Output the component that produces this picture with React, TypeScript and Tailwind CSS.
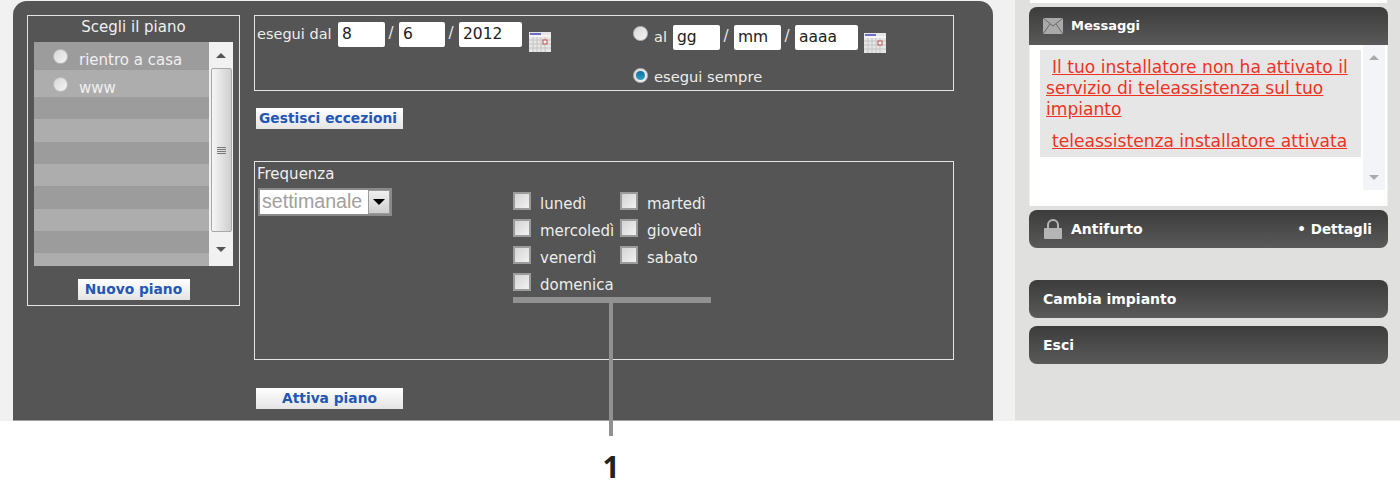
const font = "font-['DejaVu_Sans',sans-serif]";

function Radio({ on }: { on?: boolean }) {
  return (
    <span className="w-[15px] h-[15px] shrink-0 rounded-full border border-[#bdbdbd] bg-gradient-to-br from-[#d8d8d8] to-[#f4f4f4] flex items-center justify-center">
      {on && <span className="w-[9px] h-[9px] rounded-full bg-gradient-to-b from-[#0b6f9f] to-[#2f9fc4]"></span>}
    </span>
  );
}

function Field({ value, w, after }: { value: string; w: string; after?: boolean }) {
  return (
    <>
      <span className={`${w} h-[25px] bg-white rounded-[2px] pl-[4px] text-[15.5px] leading-[24px] text-[#222] shrink-0`}>{value}</span>
      {after && <span className="w-[14px] pr-[2px] text-center text-[15px] text-[#e8e8e8]">/</span>}
    </>
  );
}

function CalendarIcon() {
  return (
    <svg width="22" height="20" viewBox="0 0 22 20" className="block shrink-0">
      <rect x="0" y="0" width="22" height="20" fill="#e6e6e6" />
      <rect x="1" y="1" width="11" height="2" fill="#6f6fbf" />
      <rect x="0" y="3" width="22" height="2" fill="#f4f4f4" />
      <path d="M0 8h22M0 12h22M0 16h22M4 5v15M8 5v15M12 5v15M16 5v15" stroke="#c4c4c4" strokeWidth="1" />
      <rect x="14" y="8" width="4" height="4" fill="#f4f4f4" stroke="#c0504d" strokeWidth="1" />
    </svg>
  );
}

function Day({ label }: { label: string }) {
  return (
    <div className="flex items-start gap-[9px] h-[27px] whitespace-nowrap">
      <span className="w-[18px] h-[18px] shrink-0 border-2 border-[#9b9b9b] bg-gradient-to-br from-[#d4d4d4] to-[#f2f2f2]"></span>
      <span className="text-[15px] leading-[22px] mt-[1px] text-[#ededed]">{label}</span>
    </div>
  );
}

function FlatButton({ children, w, center }: { children: string; w: string; center?: boolean }) {
  return (
    <div className={`${w} h-[21px] bg-gradient-to-b from-[#ffffff] to-[#e4e4e4] text-[#2457b5] font-bold text-[13.8px] leading-[21px] whitespace-nowrap ${center ? "text-center" : "pl-[3px]"}`}>
      {children}
    </div>
  );
}

function DarkBar({ children, rounded = "rounded-[8px]" }: { children: React.ReactNode; rounded?: string }) {
  return (
    <div className={`h-[38px] ${rounded} bg-gradient-to-b from-[#3c3c3c] to-[#5a5a5a] flex items-center px-[14px] text-white font-bold text-[14px]`}>
      {children}
    </div>
  );
}

const rows = [
  ["h-[28px]", "bg-[#9c9c9c]"],
  ["h-[27px]", "bg-[#adadad]"],
  ["h-[22px]", "bg-[#9c9c9c]"],
  ["h-[23px]", "bg-[#adadad]"],
  ["h-[22px]", "bg-[#9c9c9c]"],
  ["h-[22px]", "bg-[#adadad]"],
  ["h-[23px]", "bg-[#9c9c9c]"],
  ["h-[22px]", "bg-[#adadad]"],
  ["h-[22px]", "bg-[#9c9c9c]"],
  ["h-[13px]", "bg-[#adadad]"],
];

export default function App() {
  return (
    <div className={`relative w-[1400px] h-[493px] bg-white overflow-hidden ${font}`}>
      <div className="flex h-[421px] bg-[#f1f1f1] pl-[13px]">
        {/* main panel */}
        <div className="w-[980px] h-[420px] mt-[1px] bg-[#545554] rounded-t-[14px] border-b border-b-[#a0a0a0] flex items-start pl-[14px] pt-[14px] text-[#ededed]">
          <div className="w-[213px] h-[291px] border border-[#e4e4e4] flex flex-col items-center">
            <div className="h-[26px] text-[15px] leading-[22px] text-[#f0f0f0]">Scegli il piano</div>
            <div className="w-[199px] h-[224px] flex">
              <div className="w-[175px] flex flex-col relative">
                {rows.map(([h, bg], i) => (
                  <div key={i} className={`${h} ${bg} flex items-center gap-[11px] pl-[19px] text-[15px] text-[#f0f0f0]`}>
                    {i === 0 && <><Radio /><span className="mt-[8px]">rientro a casa</span></>}
                    {i === 1 && <><span className="mt-[1px]"><Radio /></span><span className="mt-[9px]">www</span></>}
                  </div>
                ))}
              </div>
              <div className="w-[24px] bg-[#f1f1f1] flex flex-col items-center">
                <div className="h-[26px] flex items-center justify-center">
                  <span className="border-x-[5px] border-x-transparent border-b-[5px] border-b-[#555]"></span>
                </div>
                <div className="w-[21px] h-[164px] rounded-[2px] border border-[#a8a8a8] bg-gradient-to-r from-[#f6f6f6] to-[#cfcfcf] flex flex-col items-center justify-center gap-[1px]">
                  <span className="w-[9px] h-[1px] bg-[#777]"></span>
                  <span className="w-[9px] h-[1px] bg-[#777]"></span>
                  <span className="w-[9px] h-[1px] bg-[#777]"></span>
                  <span className="w-[9px] h-[1px] bg-[#777]"></span>
                </div>
                <div className="flex-1 flex items-center justify-center">
                  <span className="border-x-[5px] border-x-transparent border-t-[5px] border-t-[#555]"></span>
                </div>
              </div>
            </div>
            <div className="mt-[13px]">
              <FlatButton w="w-[112px]" center>Nuovo piano</FlatButton>
            </div>
          </div>

          <div className="ml-[14px] w-[700px] flex flex-col">
            {/* date range */}
            <div className="h-[76px] border border-[#e4e4e4] flex pl-[2px] pt-[6px]">
              <div className="w-[376px] flex items-start">
                <span className="w-[81px] text-[14.5px] leading-[24px] whitespace-nowrap">esegui dal</span>
                <Field value="8" w="w-[47px]" after />
                <Field value="6" w="w-[46px]" after />
                <Field value="2012" w="w-[63px]" />
                <span className="ml-[7px] mt-[10px]"><CalendarIcon /></span>
              </div>
              <div className="flex flex-col gap-[9px]">
                <div className="flex items-start mt-[3px]">
                  <span className="mt-[1px]"><Radio /></span>
                  <span className="w-[25px] pl-[6px] text-[14.5px] leading-[24px]">al</span>
                  <Field value="gg" w="w-[47px]" after />
                  <Field value="mm" w="w-[47px]" after />
                  <Field value="aaaa" w="w-[63px]" />
                  <span className="ml-[6px] mt-[8px]"><CalendarIcon /></span>
                </div>
                <div className="flex items-center gap-[6px] text-[14.7px]">
                  <Radio on />
                  <span className="mt-[4px]">esegui sempre</span>
                </div>
              </div>
            </div>

            <div className="mt-[17px] ml-[2px]">
              <FlatButton w="w-[147px]">Gestisci eccezioni</FlatButton>
            </div>

            {/* frequency */}
            <div className="mt-[32px] h-[199px] border border-[#e4e4e4] flex items-start pl-[3px] pt-[2px]">
              <div className="w-[255px]">
                <div className="-ml-[1px] text-[15px] leading-[20px] text-[#f0f0f0]">Frequenza</div>
                <div className="mt-[4px] w-[134px] h-[28px] border-2 border-[#8a8a8a] bg-white flex items-center pl-[2px] font-['Liberation_Sans',sans-serif] text-[19.6px] text-[#a0a0a0]">
                  <span className="flex-1">settimanale</span>
                  <span className="w-[22px] h-[24px] border border-[#9a9a9a] bg-gradient-to-b from-[#f0f0f0] to-[#cfcfcf] flex items-center justify-center">
                    <span className="border-x-[6px] border-x-transparent border-t-[6px] border-t-black"></span>
                  </span>
                </div>
              </div>
              <div className="mt-[28px] grid grid-cols-[107px_100px] auto-rows-[27px]">
                <Day label="lunedì" />
                <Day label="martedì" />
                <Day label="mercoledì" />
                <Day label="giovedì" />
                <Day label="venerdì" />
                <Day label="sabato" />
                <Day label="domenica" />
              </div>
            </div>

            <div className="mt-[28px] ml-[2px]">
              <FlatButton w="w-[147px]" center>Attiva piano</FlatButton>
            </div>
          </div>
        </div>

        {/* sidebar */}
        <div className="ml-[22px] w-[385px] h-[421px] bg-[#e0e0de] border-b border-b-[#eeeeee] pl-[14px] pr-[12px]">
          <div className="h-[3px] mx-[1px] bg-white"></div>
          <div className="mt-[4px]">
            <DarkBar rounded="rounded-t-[8px]">
              <svg width="20" height="16" viewBox="0 0 20 16" className="mr-[8px]">
                <rect width="20" height="16" fill="#a9a9a9" />
                <path d="M0 0l10 8 10-8M0 16l7-10M20 16l-7-10" fill="none" stroke="#6a6a6a" strokeWidth="1" />
              </svg>
              <span className="text-[13px]">Messaggi</span>
            </DarkBar>
            <div className="h-[161px] bg-white flex pl-[10px] pr-[2px] border-x border-x-[#eeeeee]">
              <div className="w-[322px] h-[107px] mt-[5px] bg-[#e6e6e6] pl-[6px] text-[17.1px] leading-[21px] text-[#f0321e] underline">
                <p className="pt-[7px] whitespace-nowrap"><span className="pl-[6px]">Il tuo installatore non ha attivato il</span><br />servizio di teleassistenza sul tuo<br />impianto</p>
                <p className="mt-[11px] pl-[6px] whitespace-nowrap">teleassistenza installatore attivata</p>
              </div>
              <div className="ml-[2px] w-[22px] h-[145px] bg-[#f3f4f7] flex flex-col items-center justify-between py-[10px]">
                <span className="border-x-[5px] border-x-transparent border-b-[5px] border-b-[#aaa]"></span>
                <span className="border-x-[5px] border-x-transparent border-t-[5px] border-t-[#aaa]"></span>
              </div>
            </div>
          </div>
          <div className="mt-[4px]">
            <DarkBar>
              <svg width="18" height="20" viewBox="0 0 18 20" className="ml-[1px] mr-[9px]">
                <path d="M4 9V6a5 5 0 0 1 10 0v3" fill="none" stroke="#b5b5b5" strokeWidth="2" />
                <rect x="0" y="9" width="18" height="11" rx="1" fill="#b5b5b5" />
              </svg>
              <span>Antifurto</span>
              <span className="ml-auto text-[13.5px] mr-[2px]">• Dettagli</span>
            </DarkBar>
          </div>
          <div className="mt-[32px]"><DarkBar>Cambia impianto</DarkBar></div>
          <div className="mt-[8px]"><DarkBar>Esci</DarkBar></div>
        </div>
      </div>

      {/* callout */}
      <div className="absolute left-[513px] top-[297px] w-[198px] h-[6px] bg-[#919191]"></div>
      <div className="absolute left-[609px] top-[303px] w-[4px] h-[133px] bg-[#919191]"></div>
      <div className="absolute left-[601px] top-[448px] w-[20px] text-center font-['Open_Sans',sans-serif] font-bold text-[30px] leading-[38px] text-[#222]">1</div>
    </div>
  );
}
